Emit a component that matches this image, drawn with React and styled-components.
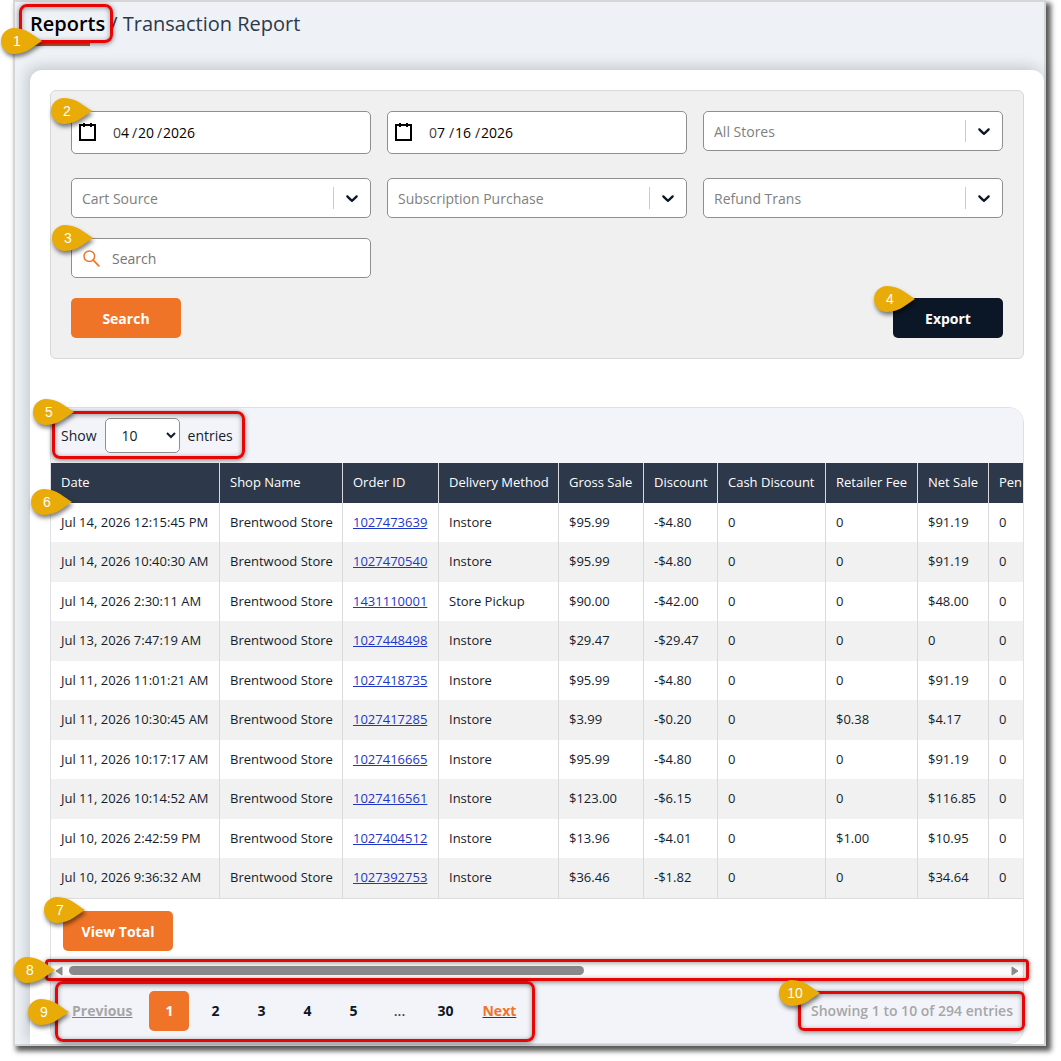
import React, { useState } from "react";
import styled, { createGlobalStyle } from "styled-components";

const columns = [
  { title: "Date", width: 169 },
  { title: "Shop Name", width: 123 },
  { title: "Order ID", width: 96 },
  { title: "Delivery Method", width: 120 },
  { title: "Gross Sale", width: 85 },
  { title: "Discount", width: 74 },
  { title: "Cash Discount", width: 108 },
  { title: "Retailer Fee", width: 92 },
  { title: "Net Sale", width: 71 },
  { title: "Pen" },
];

const rows = [
  ["Jul 14, 2026 12:15:45 PM", "Brentwood Store", "1027473639", "Instore", "$95.99", "-$4.80", "0", "0", "$91.19", "0"],
  ["Jul 14, 2026 10:40:30 AM", "Brentwood Store", "1027470540", "Instore", "$95.99", "-$4.80", "0", "0", "$91.19", "0"],
  ["Jul 14, 2026 2:30:11 AM", "Brentwood Store", "1431110001", "Store Pickup", "$90.00", "-$42.00", "0", "0", "$48.00", "0"],
  ["Jul 13, 2026 7:47:19 AM", "Brentwood Store", "1027448498", "Instore", "$29.47", "-$29.47", "0", "0", "0", "0"],
  ["Jul 11, 2026 11:01:21 AM", "Brentwood Store", "1027418735", "Instore", "$95.99", "-$4.80", "0", "0", "$91.19", "0"],
  ["Jul 11, 2026 10:30:45 AM", "Brentwood Store", "1027417285", "Instore", "$3.99", "-$0.20", "0", "$0.38", "$4.17", "0"],
  ["Jul 11, 2026 10:17:17 AM", "Brentwood Store", "1027416665", "Instore", "$95.99", "-$4.80", "0", "0", "$91.19", "0"],
  ["Jul 11, 2026 10:14:52 AM", "Brentwood Store", "1027416561", "Instore", "$123.00", "-$6.15", "0", "0", "$116.85", "0"],
  ["Jul 10, 2026 2:42:59 PM", "Brentwood Store", "1027404512", "Instore", "$13.96", "-$4.01", "0", "$1.00", "$10.95", "0"],
  ["Jul 10, 2026 9:36:32 AM", "Brentwood Store", "1027392753", "Instore", "$36.46", "-$1.82", "0", "0", "$34.64", "0"],
];

const pages = ["1", "2", "3", "4", "5", "...", "30"];

const Pin = ({ number, top, left }) => (
  <PinBox $top={top} $left={left}>
    <PinShape width="41" height="26" viewBox="0 0 41 26" aria-hidden="true">
      <path
        d="M41 13C34 9 26 0 13 0a13 13 0 0 0 0 26C26 26 34 17 41 13Z"
        fill="#e8ab07"
      />
    </PinShape>
    <PinNumber>{number}</PinNumber>
  </PinBox>
);

const DateField = ({ label, month, day, year, wide, children }) => (
  <DateBox role="group" aria-label={label}>
    <CalendarButton type="button" aria-label={"Open calendar, " + label}>
      <svg width="19" height="19" viewBox="0 0 19 19" fill="none" stroke="#000" strokeWidth="2">
        <rect x="2" y="2" width="15" height="15" />
        <path d="M6 0v4M13 0v4" />
      </svg>
    </CalendarButton>
    <Zero>0</Zero>
    <DatePart $width={wide ? 12 : 11} aria-label="Month" defaultValue={month} />
    <Slash>/</Slash>
    <DatePart $width={wide ? 20 : 19} aria-label="Day" defaultValue={day} />
    <Slash>/</Slash>
    <DatePart $width={40} aria-label="Year" defaultValue={year} />
    {children}
  </DateBox>
);

const SelectField = ({ label }) => (
  <SelectBox>
    <Select aria-label={label} defaultValue="">
      <option value="">{label}</option>
    </Select>
    <Divider />
    <Chevron width="20" height="20" viewBox="0 0 20 20" aria-hidden="true">
      <path
        fill="#0b1626"
        d="M4.516 7.548c0.436-0.446 1.043-0.481 1.576 0l3.908 3.747 3.908-3.747c0.533-0.481 1.141-0.446 1.574 0 0.436 0.445 0.408 1.197 0 1.615-0.406 0.418-4.695 4.502-4.695 4.502-0.217 0.223-0.502 0.335-0.787 0.335s-0.57-0.112-0.789-0.335c0 0-4.287-4.084-4.695-4.502s-0.436-1.17 0-1.615z"
      />
    </Chevron>
  </SelectBox>
);

const App = () => {
  const [search, setSearch] = useState("");
  const [page, setPage] = useState("1");

  return (
    <>
      <GlobalStyle />
      <Frame>
        <Header>
          <Current>
            <CurrentLink href="#reports">Reports</CurrentLink>
            <Underline />
            <Mark $inset="-6px -8px 3px -11px" />
            <Pin number="1" top={18} left={-29} />
          </Current>
          <Crumb>/ Transaction Report</Crumb>
        </Header>
        <Content>
          <Filters>
            <Fields $gap={24}>
              <DateField label="From" month="4" day="20" year="2026">
                <Pin number="2" top={-14} left={-21} />
              </DateField>
              <DateField label="To" month="7" day="16" year="2026" wide />
              <SelectField label="All Stores" />
            </Fields>
            <Fields $gap={20}>
              <SelectField label="Cart Source" />
              <SelectField label="Subscription Purchase" />
              <SelectField label="Refund Trans" />
            </Fields>
            <Fields $gap={20}>
              <SearchBox>
                <svg width="17" height="17" viewBox="0 0 17 17" fill="none" stroke="#f07427" aria-hidden="true">
                  <circle cx="6.3" cy="6.3" r="5.3" strokeWidth="1.5" />
                  <path d="M10.2 10.2l5.6 5.6" strokeWidth="1.7" strokeLinecap="round" />
                </svg>
                <SearchInput
                  type="text"
                  aria-label="Search"
                  placeholder="Search"
                  value={search}
                  onChange={(e) => {
                    setSearch(e.target.value);
                  }}
                />
                <Pin number="3" top={-14} left={-20} />
              </SearchBox>
            </Fields>
            <Actions>
              <Button type="button">Search</Button>
              <Anchor>
                <Button type="button" $dark>
                  Export
                </Button>
                <Pin number="4" top={-12} left={-19} />
              </Anchor>
            </Actions>
          </Filters>

          <Report>
            <TopBar>
              <Entries>
                <label htmlFor="entries">Show</label>
                <EntriesSelect id="entries" defaultValue="10">
                  <option>10</option>
                  <option>25</option>
                  <option>50</option>
                </EntriesSelect>
                <span>entries</span>
                <Mark $inset="-7px -12px -6px -9px" />
                <Pin number="5" top={-19} left={-28} />
              </Entries>
            </TopBar>
            <TableArea>
              <Table>
                <thead>
                  <tr>
                    {columns.map((col) => (
                      <Th key={col.title} $width={col.width}>
                        {col.title}
                      </Th>
                    ))}
                  </tr>
                </thead>
                <tbody>
                  {rows.map((row) => (
                    <Row key={row[2]}>
                      {row.map((cell, i) => (
                        <Td key={i}>
                          {i === 2 ? <OrderLink href={"#" + cell}>{cell}</OrderLink> : cell}
                        </Td>
                      ))}
                    </Row>
                  ))}
                </tbody>
              </Table>
              <Pin number="6" top={26} left={-20} />
            </TableArea>
            <TotalBar>
              <Button type="button">View Total</Button>
              <Pin number="7" top={-2} left={-7} />
            </TotalBar>
            <ScrollBar>
              <svg width="8" height="10" viewBox="0 0 8 10" aria-hidden="true">
                <path d="M7 1v8L1 5z" fill="#8a8a8a" stroke="#8a8a8a" strokeLinejoin="round" />
              </svg>
              <Track>
                <Thumb />
              </Track>
              <svg width="8" height="10" viewBox="0 0 8 10" aria-hidden="true">
                <path d="M1 1v8l6-4z" fill="#8a8a8a" stroke="#8a8a8a" strokeLinejoin="round" />
              </svg>
              <Mark $inset="-4px -6px -2px -6px" $radius={4} />
              <Pin number="8" top={-6} left={-37} />
            </ScrollBar>
            <Footer>
              <Pager aria-label="Pages">
                <PageLink href="#previous" $muted>
                  Previous
                </PageLink>
                <PageList>
                  {pages.map((item) =>
                    item === "..." ? (
                      <Dots key={item}>{item}</Dots>
                    ) : (
                      <PageButton
                        key={item}
                        type="button"
                        $active={item === page}
                        onClick={() => setPage(item)}
                      >
                        {item}
                      </PageButton>
                    )
                  )}
                </PageList>
                <PageLink href="#next">Next</PageLink>
                <Mark $inset="-10px -19px -11px -17px" />
                <Pin number="9" top={8} left={-44} />
              </Pager>
              <Showing>
                Showing 1 to 10 of 294 entries
                <Mark $inset="0 -12px 0 -13px" $radius={6} />
                <Pin number="10" top={-11} left={-32} />
              </Showing>
            </Footer>
          </Report>
        </Content>
      </Frame>
    </>
  );
};
export default App;

const GlobalStyle = createGlobalStyle`
  * {
    box-sizing: border-box;
  }
  body {
    margin: 0;
    background-color: #fff;
    font-family: "Open Sans", "Noto Sans", sans-serif;
    font-size: 14px;
    color: #141d2b;
  }
  button, input, select {
    font-family: inherit;
    font-size: 14px;
  }
`;
const Frame = styled.div`
  margin: 0 15px 15px 13px;
  border: 2px solid #d6d6d6;
  background-color: #eef2f6;
  box-shadow: 4px 4px 5px 1px rgba(0, 0, 0, 0.65);
`;
const Header = styled.header`
  height: 68px;
  display: flex;
  align-items: flex-start;
  gap: 5px;
  padding: 8px 15px;
  font-size: 20px;
  line-height: 27px;
`;
const Current = styled.div`
  position: relative;
`;
const CurrentLink = styled.a`
  font-weight: 600;
  color: #000;
  text-decoration: none;
`;
const Underline = styled.div`
  width: 60px;
  height: 4px;
  margin-top: 5px;
  background-color: #c8502c;
`;
const Crumb = styled.span`
  color: #2d394b;
`;
const Content = styled.main`
  margin-left: 15px;
  padding: 20px 20px 0;
  border-radius: 12px 12px 0 0;
  background-color: #fff;
  box-shadow: -3px -3px 14px rgba(20, 30, 40, 0.2);
`;
const Filters = styled.section`
  padding: 20px;
  border: 1px solid #d8d8d8;
  border-radius: 6px;
  background-color: #f0f0f0;
`;
const Fields = styled.div`
  display: grid;
  grid-template-columns: repeat(3, 1fr);
  align-items: start;
  column-gap: 16px;
  margin-bottom: ${(p) => p.$gap}px;
`;
const DateBox = styled.div`
  position: relative;
  height: 43px;
  display: flex;
  align-items: center;
  padding-left: 6px;
  border: 1px solid #8f8f8f;
  border-radius: 5px;
  background-color: #fff;
`;
const CalendarButton = styled.button`
  display: flex;
  margin-right: 16px;
  padding: 0;
  border: 0;
  background: none;
`;
const Zero = styled.span`
  color: #444;
`;
const Slash = styled.span`
  width: 6px;
  color: #222;
`;
const DatePart = styled.input`
  width: ${(p) => p.$width}px;
  padding: 0;
  border: 0;
  outline: none;
  color: #000;
`;
const SelectBox = styled.div`
  height: 40px;
  display: flex;
  align-items: center;
  border: 1px solid #8f8f8f;
  border-radius: 5px;
  background-color: #fff;
`;
const Select = styled.select`
  flex: 1;
  min-width: 0;
  height: 38px;
  padding: 0 10px;
  border: 0;
  outline: none;
  appearance: none;
  background: none;
  color: #808080;
`;
const Divider = styled.span`
  width: 1px;
  height: 22px;
  background-color: #ccc;
`;
const Chevron = styled.svg`
  margin: 0 8px;
`;
const SearchBox = styled.div`
  position: relative;
  height: 40px;
  display: flex;
  align-items: center;
  gap: 12px;
  padding-left: 11px;
  border: 1px solid #8f8f8f;
  border-radius: 5px;
  background-color: #fff;
`;
const SearchInput = styled.input`
  flex: 1;
  min-width: 0;
  height: 38px;
  padding: 0;
  border: 0;
  outline: none;
  background: none;
  ::placeholder {
    color: #6f7680;
  }
`;
const Actions = styled.div`
  display: flex;
  justify-content: space-between;
`;
const Anchor = styled.div`
  position: relative;
`;
const Button = styled.button`
  width: 110px;
  height: 40px;
  padding: 0;
  border: 0;
  border-radius: 5px;
  background-color: ${(p) => (p.$dark ? "#0b1626" : "#f07427")};
  color: #fff;
  font-weight: 700;
`;
const Report = styled.section`
  margin-top: 48px;
  border: 1px solid #dfe0e4;
  border-radius: 15px;
`;
const TopBar = styled.div`
  height: 55px;
  display: flex;
  padding: 10px;
  border-radius: 14px 14px 0 0;
  background-color: #f3f4f9;
`;
const Entries = styled.div`
  position: relative;
  display: flex;
  align-items: center;
  gap: 8px;
`;
const EntriesSelect = styled.select`
  width: 75px;
  height: 35px;
  padding: 0 0 0 12px;
  border: 1px solid #8f8f8f;
  border-radius: 5px;
  background-color: #fff;
  color: #141d2b;
`;
const TableArea = styled.div`
  position: relative;
`;
const Table = styled.table`
  width: 100%;
  table-layout: fixed;
  border-collapse: separate;
  border-spacing: 0;
  border-bottom: 1px solid #dcdde0;
  font-size: 13px;
  background-color: #fff;
`;
const Th = styled.th`
  width: ${(p) => (p.$width ? p.$width + "px" : "auto")};
  height: 40px;
  padding: 0 0 2px 10px;
  border-right: 1px solid #d9dadc;
  background-color: #2d394b;
  color: #fff;
  font-weight: 400;
  text-align: left;
  white-space: nowrap;
  &:last-child {
    border-right: 0;
  }
`;
const Td = styled.td`
  padding: 0 0 2px 10px;
  border-right: 1px solid #d9dadc;
  white-space: nowrap;
  &:last-child {
    border-right: 0;
  }
`;
const Row = styled.tr`
  height: 39px;
  &:nth-child(even) {
    height: 40px;
    background-color: #f1f1f1;
  }
`;
const OrderLink = styled.a`
  color: #1f35c7;
`;
const TotalBar = styled.div`
  position: relative;
  padding: 12px;
  height: 64px;
`;
const ScrollBar = styled.div`
  position: relative;
  height: 16px;
  display: flex;
  align-items: center;
  gap: 6px;
  padding: 0 4px 1px;
  background-color: #fcfcfc;
`;
const Track = styled.div`
  flex: 1;
`;
const Thumb = styled.div`
  width: 55%;
  height: 9px;
  border-radius: 5px;
  background-color: #8a8a8a;
`;
const Footer = styled.footer`
  height: 64px;
  display: flex;
  justify-content: space-between;
  padding: 12px 10px 12px 21px;
  border-radius: 0 0 14px 14px;
  background-color: #f3f4f9;
`;
const Pager = styled.nav`
  position: relative;
  display: flex;
  align-items: center;
  gap: 17px;
`;
const PageList = styled.div`
  display: flex;
  gap: 6px;
`;
const PageButton = styled.button`
  width: 40px;
  height: 40px;
  padding: 0 0 2px;
  border: 0;
  border-radius: 5px;
  background-color: ${(p) => (p.$active ? "#f07427" : "transparent")};
  color: ${(p) => (p.$active ? "#fff" : "#0b1626")};
  font-weight: 700;
`;
const Dots = styled.span`
  width: 40px;
  line-height: 40px;
  text-align: center;
  color: #444;
  font-weight: 600;
`;
const PageLink = styled.a`
  line-height: 40px;
  color: ${(p) => (p.$muted ? "#a6a6a6" : "#f07427")};
  font-weight: 700;
  text-decoration: underline;
  text-decoration-color: ${(p) => (p.$muted ? "#808080" : "#2d394b")};
`;
const Showing = styled.div`
  position: relative;
  line-height: 40px;
  color: #a6a6a6;
  font-weight: 600;
`;

// callouts drawn over the screen
const Mark = styled.div`
  position: absolute;
  inset: ${(p) => p.$inset};
  border: 3px solid #e80505;
  border-radius: ${(p) => p.$radius || 8}px;
  box-shadow: 0 1px 5px rgba(0, 0, 0, 0.5), inset 0 1px 5px rgba(0, 0, 0, 0.4);
  pointer-events: none;
`;
const PinBox = styled.div`
  position: absolute;
  z-index: 2;
  top: ${(p) => p.$top}px;
  left: ${(p) => p.$left}px;
  width: 41px;
  height: 26px;
  pointer-events: none;
`;
const PinShape = styled.svg`
  position: absolute;
  filter: drop-shadow(1px 3px 2px rgba(0, 0, 0, 0.5));
`;
const PinNumber = styled.div`
  position: relative;
  width: 32px;
  font-family: "Liberation Sans", Arial, sans-serif;
  font-size: 14px;
  font-weight: 400;
  line-height: 27px;
  text-align: center;
  color: #fff;
`;
